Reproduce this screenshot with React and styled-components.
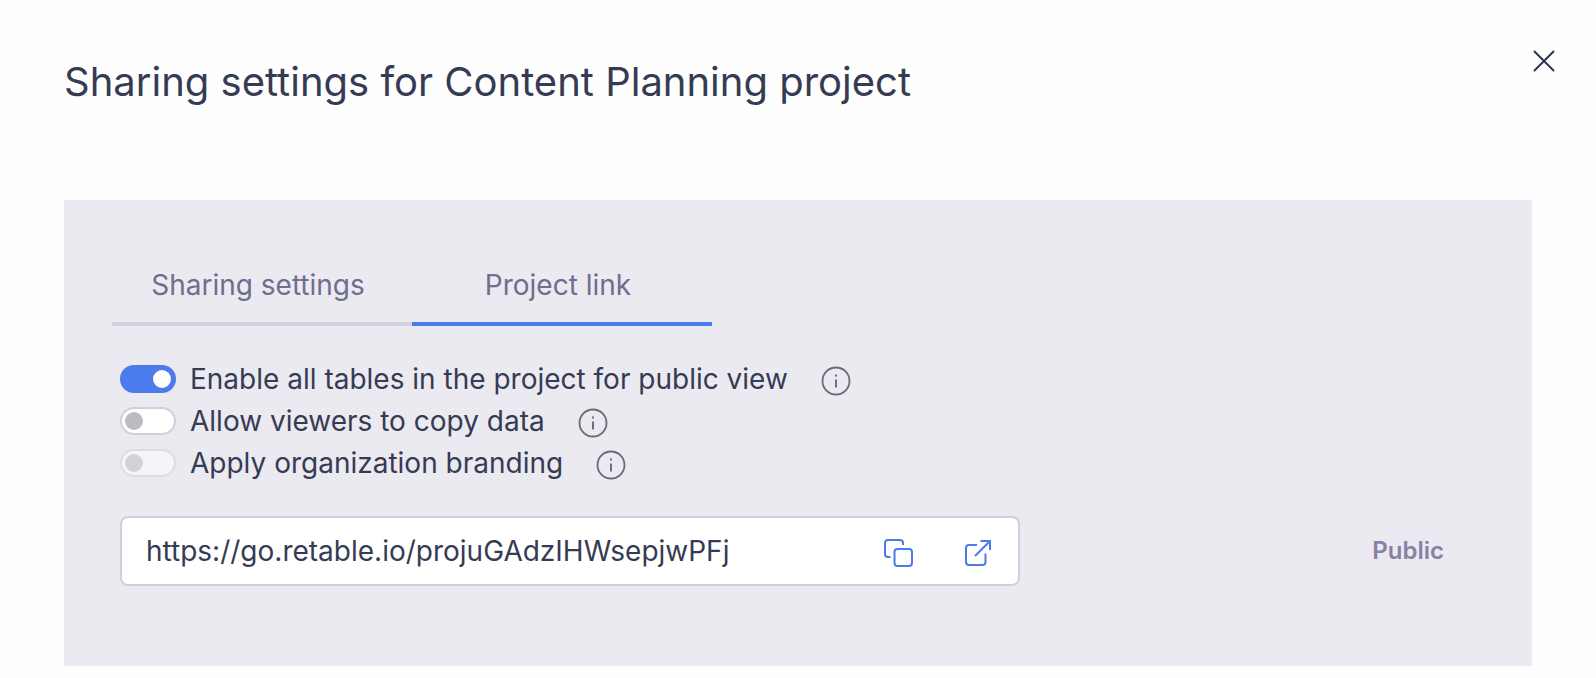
import React from 'react'
import styled, { createGlobalStyle } from 'styled-components'

const GlobalStyle = createGlobalStyle`
  * {
    box-sizing: border-box;
  }
  body {
    margin: 0;
    background: #fefefe;
    color: #363b54;
    font-family: Inter, 'Liberation Sans', sans-serif;
  }
  button, input {
    font-family: inherit;
  }
`

const Modal = styled.section`
  padding: 40px 64px 12px;
`

const Header = styled.header`
  display: flex;
  align-items: flex-start;
  justify-content: space-between;
  margin-right: -26px;
  padding-bottom: 76px;
`

const Title = styled.h1`
  margin: 0;
  font-size: 40px;
  line-height: 84px;
  font-weight: 400;
`

const IconButton = styled.button`
  display: flex;
  flex: none;
  padding: 0;
  border: 0;
  background: none;
  color: ${({ color }) => color || '#4b7bec'};
  cursor: pointer;
`

const CloseButton = styled(IconButton)`
  margin-top: 5px;
`

const Panel = styled.div`
  padding: 48px 48px 80px;
  background: #ebeaf0;
`

const Tabs = styled.div`
  display: grid;
  grid-template-columns: 1fr 1fr;
  max-width: 600px;
`

const Tab = styled.button`
  height: 78px;
  padding: 0 8px 0 0;
  border: 0;
  border-bottom: 4px solid ${({ $active }) => ($active ? '#4b7bec' : '#d0d3df')};
  background: none;
  color: #706e8e;
  font-size: 28px;
  cursor: pointer;
`

const Body = styled.div`
  display: flex;
  flex-direction: column;
  gap: 32px;
  padding: 32px 8px 0;
`

const Options = styled.div`
  display: flex;
  flex-direction: column;
`

const Option = styled.div`
  display: flex;
  align-items: center;
  height: 42px;
`

const OptionLabel = styled.label`
  display: flex;
  align-items: center;
  gap: 14px;
  font-size: 28px;
  line-height: 42px;
`

const Switch = styled.input`
  appearance: none;
  display: flex;
  align-items: center;
  width: 56px;
  height: 28px;
  margin: 0;
  padding: 0 3px;
  border: 2px solid #d0d0dd;
  border-radius: 14px;
  background: #ffffff;

  &::before {
    content: '';
    width: 18px;
    height: 18px;
    border-radius: 50%;
    background: #bcbbc4;
  }
  &:checked {
    justify-content: flex-end;
    border-color: #4b7bec;
    background: #4b7bec;
  }
  &:checked::before {
    background: #ffffff;
  }
  &:disabled {
    opacity: 0.5;
  }
`

const InfoButton = styled(IconButton)`
  margin: 4px 0 0 33px;
`

const LinkRow = styled.div`
  display: flex;
  align-items: center;
  justify-content: space-between;
  gap: 32px;
`

const LinkBox = styled.div`
  display: flex;
  flex: 1;
  align-items: center;
  gap: 48px;
  max-width: 900px;
  height: 70px;
  padding: 0 24px;
  border: 2px solid #d0d0dd;
  border-radius: 8px;
  background: #ffffff;
`

const LinkInput = styled.input`
  flex: 1;
  min-width: 0;
  padding: 0;
  border: 0;
  outline: 0;
  background: none;
  color: #363b54;
  font-size: 28px;
`

const Visibility = styled.span`
  padding: 0 32px 2px 0;
  color: #8781a5;
  font-size: 24px;
  font-weight: 600;
`

const CloseIcon = () => (
  <svg width='28' height='28' viewBox='0 0 28 28' fill='none' stroke='currentColor' strokeWidth='2'>
    <path d='M4.5 6.5l19 19M23.5 6.5l-19 19' strokeLinecap='round' />
  </svg>
)

const InfoIcon = () => (
  <svg width='30' height='30' viewBox='0 0 30 30' fill='none' stroke='currentColor'>
    <circle cx='15' cy='15' r='13.5' strokeWidth='1.8' />
    <path d='M15 13.5v8M15 8.6v2' strokeWidth='1.9' />
  </svg>
)

const CopyIcon = () => (
  <svg width='32' height='32' viewBox='0 0 32 32' fill='none' stroke='currentColor' strokeWidth='2'>
    <rect x='12.5' y='14' width='17.5' height='17' rx='3' />
    <path d='M8.5 22H6a3 3 0 0 1-3-3V8a3 3 0 0 1 3-3h12a3 3 0 0 1 3 3v2' />
  </svg>
)

const OpenIcon = () => (
  <svg width='32' height='32' viewBox='0 0 32 32' fill='none' stroke='currentColor' strokeWidth='2'>
    <path d='M15 10H7a3 3 0 0 0-3 3v14a3 3 0 0 0 3 3h13.500a3 3 0 0 0 3-3v-8.500' />
    <path d='M18.500 6H28v9M28 6L13 21' />
  </svg>
)

const options = [
  { id: 'public-view', text: 'Enable all tables in the project for public view', checked: true },
  { id: 'copy-data', text: 'Allow viewers to copy data' },
  { id: 'branding', text: 'Apply organization branding', disabled: true },
]

const tabs = ['Sharing settings', 'Project link']

const App = () => {
  const [activeTab, setActiveTab] = React.useState('Project link')

  return (
    <>
      <GlobalStyle />
      <Modal>
        <Header>
          <Title>Sharing settings for Content Planning project</Title>
          <CloseButton color='#30364a' aria-label='Close'>
            <CloseIcon />
          </CloseButton>
        </Header>
        <Panel>
          <Tabs role='tablist'>
            {tabs.map((tab) => (
              <Tab
                key={tab}
                role='tab'
                aria-selected={tab === activeTab}
                $active={tab === activeTab}
                onClick={() => setActiveTab(tab)}
              >
                {tab}
              </Tab>
            ))}
          </Tabs>
          <Body>
            <Options>
              {options.map((item) => (
                <Option key={item.id}>
                  <OptionLabel htmlFor={item.id}>
                    <Switch
                      id={item.id}
                      type='checkbox'
                      role='switch'
                      defaultChecked={item.checked}
                      disabled={item.disabled}
                    />
                    {item.text}
                  </OptionLabel>
                  <InfoButton color='#6b6a76' aria-label={`About: ${item.text}`}>
                    <InfoIcon />
                  </InfoButton>
                </Option>
              ))}
            </Options>
            <LinkRow>
              <LinkBox>
                <LinkInput
                  aria-label='Project link'
                  readOnly
                  value='https://go.retable.io/projuGAdzIHWsepjwPFj'
                />
                <IconButton aria-label='Copy link'>
                  <CopyIcon />
                </IconButton>
                <IconButton aria-label='Open link'>
                  <OpenIcon />
                </IconButton>
              </LinkBox>
              <Visibility>Public</Visibility>
            </LinkRow>
          </Body>
        </Panel>
      </Modal>
    </>
  )
}

export default App
